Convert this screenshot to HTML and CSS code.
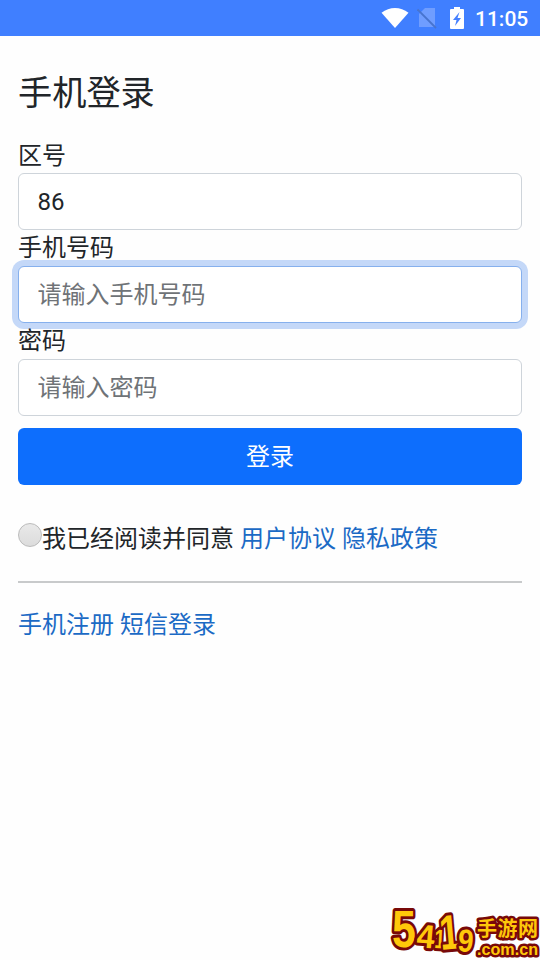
FILE: index.html
```html
<!DOCTYPE html>
<html lang="zh-CN">
<head>
<meta charset="utf-8">
<title>手机登录</title>
<link rel="stylesheet" href="styles.css">
</head>
<body>
<header class="status">
  <svg class="wifi" viewBox="0 0 28 20"><path d="M.5 4.8C8.5-1.5 19.5-1.5 27.5 4.8L14 20Z" fill="#fff"/></svg>
  <svg class="sim" viewBox="0 0 20 22"><path d="M8 1H18V20H2V7Z" fill="#6f9dff"/><path d="M.5 2.5L19 21" stroke="#4774cf" stroke-width="1.8"/></svg>
  <svg class="battery" viewBox="0 0 14 22"><path d="M4 0h6v2h3q1 0 1 1v18q0 1-1 1H1q-1 0-1-1V3q0-1 1-1h3Z" fill="#fff"/><path d="M9.5 5L3 13h3.5L5 19l6-8H7.5Z" fill="#4680ff"/></svg>
  <span class="clock">11:05</span>
</header>
<main class="page">
  <h1 class="title">手机登录</h1>
  <form class="form">
    <label class="label" for="area">区号</label>
    <input class="field" id="area" type="text" value="86">
    <label class="label" for="phone">手机号码</label>
    <input class="field field-active" id="phone" type="text" placeholder="请输入手机号码">
    <label class="label" for="password">密码</label>
    <input class="field" id="password" type="password" placeholder="请输入密码">
    <button class="submit" type="button">登录</button>
  </form>
  <div class="agree"><span class="radio"></span><span>我已经阅读并同意 <a href="#">用户协议</a> <a href="#">隐私政策</a></span></div>
  <hr class="rule">
  <nav class="links"><a href="#">手机注册</a> <a href="#">短信登录</a></nav>
</main>
<svg class="mark" viewBox="0 0 152 55">
  <g class="mark-digits">
    <text transform="translate(4 42) scale(.84 1)" font-size="51">5</text>
    <text transform="translate(28 42) rotate(5) scale(.98 1)" font-size="33">4</text>
    <text transform="translate(46 43) rotate(3) scale(.7 1)" font-size="27">1</text>
    <text transform="translate(53 45) rotate(-5) scale(.72 1)" font-size="49">1</text>
    <text transform="translate(69 46) rotate(5) scale(.88 1)" font-size="32">9</text>
  </g>
  <g class="mark-name">
    <text x="89" y="31" font-size="20" textLength="61">手游网</text>
    <text class="mark-domain" x="89" y="50" font-size="17" textLength="61" lengthAdjust="spacingAndGlyphs">.com.cn</text>
  </g>
</svg>
</body>
</html>
```
FILE: styles.css
```css
* { box-sizing: border-box; }
body {
  margin: 0;
  min-height: 960px;
  overflow: hidden;
  background: #fefefe;
  color: #212529;
  font: 24px/36px Roboto, "Noto Sans CJK SC", sans-serif;
}
a { color: #1b6ac5; text-decoration: none; }
.status {
  display: flex;
  align-items: center;
  justify-content: flex-end;
  height: 36px;
  padding-right: 12px;
  background: #407fff;
  color: #fff;
}
.wifi { width: 28px; height: 20px; margin-right: 8px; }
.sim { width: 20px; height: 22px; margin-right: 13px; }
.battery { width: 14px; height: 22px; margin-right: 11px; }
.clock { width: 53px; padding-top: 2px; font-size: 21px; font-weight: 500; white-space: nowrap; }
.page { padding: 37px 18px 0; }
.title { margin: 0 0 24px; font-size: 34.2px; font-weight: 400; line-height: 41px; }
.form { display: flex; flex-direction: column; }
.label { height: 36px; }
.form .label:first-child { height: 35px; }
.field {
  width: 100%;
  height: 57px;
  padding: 0 19px 0 18.5px;
  border: 1.5px solid #ced4da;
  border-radius: 6px;
  outline: none;
  background: #fff;
  color: #212529;
  font: inherit;
}
.field::placeholder { color: #6f7377; opacity: 1; }
.field-active { border-color: #86b0ed; box-shadow: 0 0 0 6px #c4d8f8; }
.submit {
  height: 57px;
  margin-top: 12px;
  padding: 0;
  border: 0;
  border-radius: 6px;
  background: #0d6efd;
  color: #fff;
  font: inherit;
}
.agree { display: flex; align-items: center; margin-top: 36px; white-space: nowrap; }
.radio {
  width: 24px;
  height: 24px;
  margin-top: -8px;
  border: 1px solid #bbb;
  border-radius: 50%;
  background: linear-gradient(#e9e9e9, #dcdcdc);
}
.rule { height: 1.5px; margin: 24px 0; border: 0; background: #c8cacb; }
.mark { position: absolute; left: 388px; top: 905px; width: 152px; height: 55px; }
.mark text { fill: #ffc80a; stroke: #780909; paint-order: stroke; stroke-linejoin: round; font-weight: 700; }
.mark-digits text { font-family: "Liberation Sans", sans-serif; stroke-width: 6px; }
.mark-name text { font-family: "Noto Sans CJK SC", sans-serif; stroke-width: 5px; }
.mark-name .mark-domain { font-family: "Liberation Sans", sans-serif; }
```
